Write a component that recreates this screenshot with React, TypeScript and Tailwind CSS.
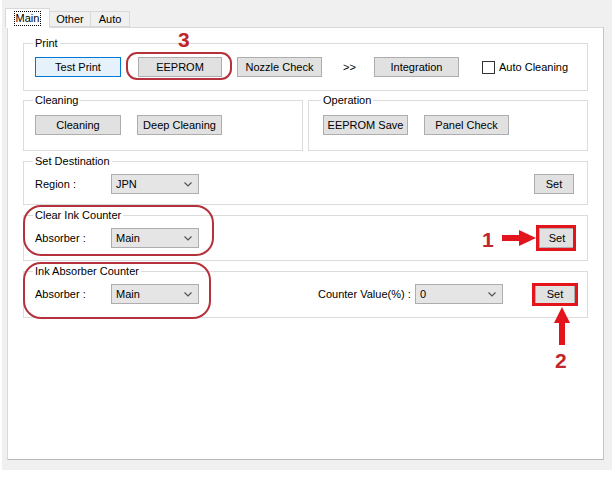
import React from "react";

const font = { fontFamily: '"Liberation Sans", "Noto Sans CJK JP", sans-serif' };

function Btn({ label, w, primary, className = "" }: { label: string; w: number; primary?: boolean; className?: string }) {
  return (
    <div
      className={`h-[20px] shrink-0 flex items-center justify-center whitespace-nowrap text-[11px] leading-none border ${
        primary ? "bg-[#e5f1fb] border-[#0078d7]" : "bg-[#e1e1e1] border-[#adadad]"
      } ${className}`}
      style={{ width: w }}
    >
      {label}
    </div>
  );
}

function Combo({ value, w }: { value: string; w: number }) {
  return (
    <div
      className="h-[20px] shrink-0 flex items-center justify-between bg-[#e5e5e5] border border-[#adadad] pl-[4px] pr-[6px] text-[11px]"
      style={{ width: w }}
    >
      <span>{value}</span>
      <svg width="8" height="5" viewBox="0 0 8 5">
        <path d="M0.5 0.5 L4 4 L7.5 0.5" fill="none" stroke="#555" strokeWidth="1.2" />
      </svg>
    </div>
  );
}

function Group({
  title,
  children,
  className = "",
  pt = "pt-[6px]",
  pb = "pb-[12px]",
}: {
  title: string;
  children: React.ReactNode;
  className?: string;
  pt?: string;
  pb?: string;
}) {
  return (
    <fieldset className={`border border-[#dcdcdc] pl-[11px] pr-[13px] ${pb} ${className}`}>
      <legend className="px-[2px] -ml-[2px] text-[11px] leading-[14px] whitespace-nowrap">{title}</legend>
      <div className={`flex items-center h-[20px] box-content whitespace-nowrap ${pt}`}>{children}</div>
    </fieldset>
  );
}

export default function App() {
  return (
    <div className="relative w-[616px] h-[477px] bg-white text-black" style={font}>
      <div className="ml-[2px] w-[610px] h-[470px] bg-[#f0f0f0] pt-[8px]">
        {/* tabs */}
        <div className="flex ml-[3px] h-[19px] text-[11px] relative z-10">
          <div className="w-[45px] h-[20px] bg-white border border-[#d9d9d9] border-b-white flex items-center justify-center">
            <span className="border border-dotted border-black px-[1px] leading-[13px]">Main</span>
          </div>
          <div className="w-[41px] mt-[3px] h-[16px] bg-[#f0f0f0] border border-[#d9d9d9] border-l-0 flex items-center justify-center">
            Other
          </div>
          <div className="w-[39px] mt-[3px] h-[16px] bg-[#f0f0f0] border border-[#d9d9d9] border-l-0 flex items-center justify-center">
            Auto
          </div>
        </div>

        {/* panel */}
        <div className="ml-[5px] w-[597px] h-[433px] bg-white border border-[#d9d9d9] border-r-[#c4c4c4] border-b-[#b8b8b8] pt-[8px] px-[15px]">
          <Group title="Print" pt="pt-[7px]" pb="pb-[13px]">
            <Btn label="Test Print" w={86} primary />
            <Btn label="EEPROM" w={84} className="ml-[17px]" />
            <Btn label="Nozzle Check" w={85} className="ml-[15px]" />
            <span className="ml-[21px] text-[11px] w-[14px] shrink-0">&gt;&gt;</span>
            <Btn label="Integration" w={85} className="ml-[17px]" />
            <div className="ml-[23px] w-[13px] h-[13px] shrink-0 bg-white border border-[#333]" />
            <span className="ml-[4px] text-[11px]">Auto Cleaning</span>
          </Group>

          <div className="flex gap-[5px] mt-[2px]">
            <Group title="Cleaning" className="w-[280px]" pt="pt-[8px]" pb="pb-[15px]">
              <Btn label="Cleaning" w={86} />
              <Btn label="Deep Cleaning" w={85} className="ml-[16px]" />
            </Group>
            <Group title="Operation" className="flex-1 !pl-[14px]" pt="pt-[8px]" pb="pb-[15px]">
              <Btn label="EEPROM Save" w={85} />
              <Btn label="Panel Check" w={85} className="ml-[16px]" />
            </Group>
          </div>

          <Group title="Set Destination" className="mt-[3px]" pb="pb-[10px]">
            <span className="w-[76px] shrink-0 text-[11px]">Region :</span>
            <Combo value="JPN" w={88} />
            <Btn label="Set" w={40} className="ml-auto" />
          </Group>

          <Group title="Clear Ink Counter" className="mt-[3px]">
            <span className="w-[76px] shrink-0 text-[11px]">Absorber :</span>
            <Combo value="Main" w={88} />
            <Btn label="Set" w={36} className="ml-auto mr-[-1px]" />
          </Group>

          <Group title="Ink Absorber Counter" className="mt-[3px]" pb="pb-[13px]">
            <span className="w-[76px] shrink-0 text-[11px]">Absorber :</span>
            <Combo value="Main" w={88} />
            <span className="ml-[119px] text-[11px] w-[97px] shrink-0">Counter Value(%) :</span>
            <Combo value="0" w={88} />
            <Btn label="Set" w={40} className="ml-auto mr-[-1px]" />
          </Group>
        </div>
      </div>

      {/* annotations */}
      <div className="absolute left-[178px] top-[29px] text-[21px] font-bold text-[#c0262d] leading-none">3</div>
      <div className="absolute left-[126px] top-[52px] w-[106px] h-[28px] border-2 border-[#b5323c] rounded-[11px]" />
      <div className="absolute left-[23px] top-[205px] w-[191px] h-[51px] border-2 border-[#b5323c] rounded-[18px]" />
      <div className="absolute left-[23px] top-[262px] w-[188px] h-[57px] border-2 border-[#b5323c] rounded-[18px]" />

      <div className="absolute left-[482px] top-[229px] text-[21px] font-bold text-[#c0262d] leading-none">1</div>
      <svg className="absolute left-[500px] top-[229px]" width="38" height="18" viewBox="0 0 38 18">
        <polygon points="2,6 19,6 19,1 36,9 19,17 19,12 2,12" fill="#e3141c" />
      </svg>
      <div className="absolute left-[536px] top-[225px] w-[40px] h-[26px] border-[3px] border-[#e3141c]" />

      <div className="absolute left-[532px] top-[283px] w-[46px] h-[23px] border-[3px] border-[#e3141c]" />
      <svg className="absolute left-[553px] top-[306px]" width="18" height="40" viewBox="0 0 18 40">
        <polygon points="9,1 17,17 12,17 12,39 6,39 6,17 1,17" fill="#e3141c" />
      </svg>
      <div className="absolute left-[555px] top-[350px] text-[21px] font-bold text-[#c0262d] leading-none">2</div>
    </div>
  );
}
